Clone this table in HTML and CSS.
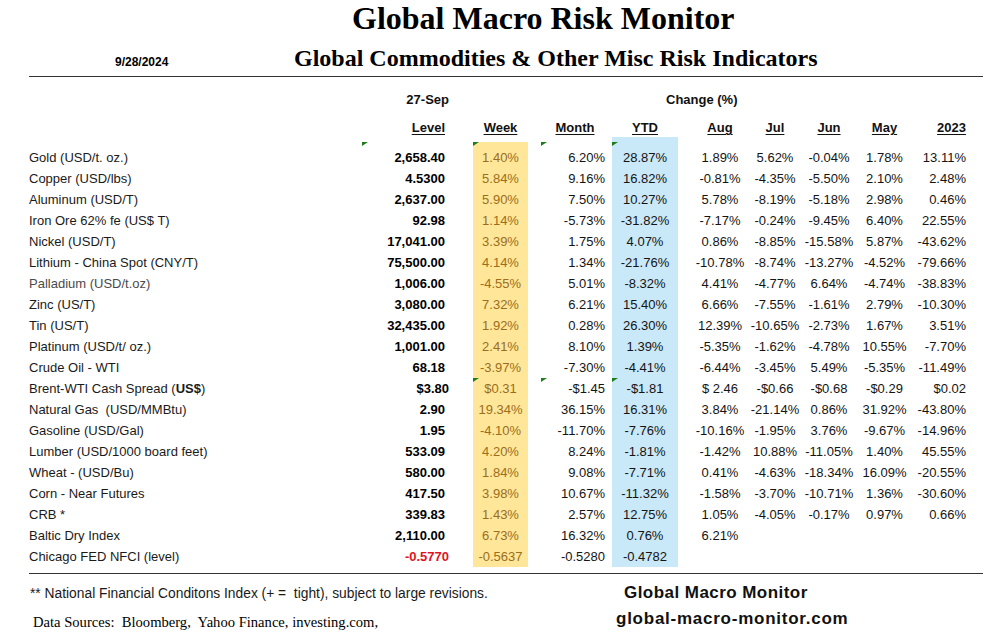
FILE: index.html
```html
<!DOCTYPE html>
<html lang="en">
<head>
<meta charset="utf-8">
<title>Global Macro Risk Monitor</title>
<link rel="stylesheet" href="styles.css">
</head>
<body>
<div class="page">
  <h1 class="title">Global Macro Risk Monitor</h1>
  <div class="subrow">
    <span class="date">9/28/2024</span>
    <h2 class="subtitle">Global Commodities &amp; Other Misc Risk Indicators</h2>
  </div>
  <div class="rule"></div>

  <div class="table">
    <div class="row hrow-a">
      <div></div>
      <div class="lvl-h">27-Sep</div>
      <div class="chg">Change (%)</div>
    </div>
    <div class="row hrow-b">
      <div></div>
      <div class="lvl"><span class="u">Level</span></div>
      <div class="wk-h"><span class="u">Week</span></div>
      <div class="mo-h"><span class="u">Month</span></div>
      <div class="ytd-h"><span class="u">YTD</span></div>
      <div class="aug"><span class="u">Aug</span></div>
      <div class="c"><span class="u">Jul</span></div>
      <div class="c"><span class="u">Jun</span></div>
      <div class="c"><span class="u">May</span></div>
      <div class="r"><span class="u">2023</span></div>
    </div>

    <div class="row first">
      <div class="lab">Gold (USD/t. oz.)</div>
      <div class="lvl flag fl-l">2,658.40</div>
      <div class="wk flag">1.40%</div>
      <div class="mo flag fl-m">6.20%</div>
      <div class="ytd flag">28.87%</div>
      <div class="aug">1.89%</div><div class="c">5.62%</div><div class="c">-0.04%</div><div class="c">1.78%</div><div class="r">13.11%</div>
    </div>
    <div class="row">
      <div class="lab">Copper (USD/lbs)</div>
      <div class="lvl">4.5300</div><div class="wk">5.84%</div><div class="mo">9.16%</div><div class="ytd">16.82%</div>
      <div class="aug">-0.81%</div><div class="c">-4.35%</div><div class="c">-5.50%</div><div class="c">2.10%</div><div class="r">2.48%</div>
    </div>
    <div class="row">
      <div class="lab">Aluminum (USD/T)</div>
      <div class="lvl">2,637.00</div><div class="wk">5.90%</div><div class="mo">7.50%</div><div class="ytd">10.27%</div>
      <div class="aug">5.78%</div><div class="c">-8.19%</div><div class="c">-5.18%</div><div class="c">2.98%</div><div class="r">0.46%</div>
    </div>
    <div class="row">
      <div class="lab">Iron Ore 62% fe (US$ T)</div>
      <div class="lvl">92.98</div><div class="wk">1.14%</div><div class="mo">-5.73%</div><div class="ytd">-31.82%</div>
      <div class="aug">-7.17%</div><div class="c">-0.24%</div><div class="c">-9.45%</div><div class="c">6.40%</div><div class="r">22.55%</div>
    </div>
    <div class="row">
      <div class="lab">Nickel (USD/T)</div>
      <div class="lvl">17,041.00</div><div class="wk">3.39%</div><div class="mo">1.75%</div><div class="ytd">4.07%</div>
      <div class="aug">0.86%</div><div class="c">-8.85%</div><div class="c">-15.58%</div><div class="c">5.87%</div><div class="r">-43.62%</div>
    </div>
    <div class="row">
      <div class="lab">Lithium - China Spot (CNY/T)</div>
      <div class="lvl">75,500.00</div><div class="wk">4.14%</div><div class="mo">1.34%</div><div class="ytd">-21.76%</div>
      <div class="aug">-10.78%</div><div class="c">-8.74%</div><div class="c">-13.27%</div><div class="c">-4.52%</div><div class="r">-79.66%</div>
    </div>
    <div class="row">
      <div class="lab muted">Palladium (USD/t.oz)</div>
      <div class="lvl">1,006.00</div><div class="wk">-4.55%</div><div class="mo">5.01%</div><div class="ytd">-8.32%</div>
      <div class="aug">4.41%</div><div class="c">-4.77%</div><div class="c">6.64%</div><div class="c">-4.74%</div><div class="r">-38.83%</div>
    </div>
    <div class="row">
      <div class="lab">Zinc (US/T)</div>
      <div class="lvl">3,080.00</div><div class="wk">7.32%</div><div class="mo">6.21%</div><div class="ytd">15.40%</div>
      <div class="aug">6.66%</div><div class="c">-7.55%</div><div class="c">-1.61%</div><div class="c">2.79%</div><div class="r">-10.30%</div>
    </div>
    <div class="row">
      <div class="lab">Tin (US/T)</div>
      <div class="lvl">32,435.00</div><div class="wk">1.92%</div><div class="mo">0.28%</div><div class="ytd">26.30%</div>
      <div class="aug">12.39%</div><div class="c">-10.65%</div><div class="c">-2.73%</div><div class="c">1.67%</div><div class="r">3.51%</div>
    </div>
    <div class="row">
      <div class="lab">Platinum (USD/t/ oz.)</div>
      <div class="lvl">1,001.00</div><div class="wk">2.41%</div><div class="mo">8.10%</div><div class="ytd">1.39%</div>
      <div class="aug">-5.35%</div><div class="c">-1.62%</div><div class="c">-4.78%</div><div class="c">10.55%</div><div class="r">-7.70%</div>
    </div>
    <div class="row">
      <div class="lab">Crude Oil - WTI</div>
      <div class="lvl">68.18</div><div class="wk">-3.97%</div><div class="mo">-7.30%</div><div class="ytd">-4.41%</div>
      <div class="aug">-6.44%</div><div class="c">-3.45%</div><div class="c">5.49%</div><div class="c">-5.35%</div><div class="r">-11.49%</div>
    </div>
    <div class="row">
      <div class="lab">Brent-WTI Cash Spread (<b>US$</b>)</div>
      <div class="lvl acc">$3.80</div><div class="wk flag">$0.31</div><div class="mo flag fl-m">-$1.45</div><div class="ytd flag">-$1.81</div>
      <div class="aug">$ 2.46</div><div class="c">-$0.66</div><div class="c">-$0.68</div><div class="c">-$0.29</div><div class="r">$0.02</div>
    </div>
    <div class="row">
      <div class="lab">Natural Gas  (USD/MMBtu)</div>
      <div class="lvl">2.90</div><div class="wk">19.34%</div><div class="mo">36.15%</div><div class="ytd">16.31%</div>
      <div class="aug">3.84%</div><div class="c">-21.14%</div><div class="c">0.86%</div><div class="c">31.92%</div><div class="r">-43.80%</div>
    </div>
    <div class="row">
      <div class="lab">Gasoline (USD/Gal)</div>
      <div class="lvl">1.95</div><div class="wk">-4.10%</div><div class="mo">-11.70%</div><div class="ytd">-7.76%</div>
      <div class="aug">-10.16%</div><div class="c">-1.95%</div><div class="c">3.76%</div><div class="c">-9.67%</div><div class="r">-14.96%</div>
    </div>
    <div class="row">
      <div class="lab">Lumber (USD/1000 board feet)</div>
      <div class="lvl">533.09</div><div class="wk">4.20%</div><div class="mo">8.24%</div><div class="ytd">-1.81%</div>
      <div class="aug">-1.42%</div><div class="c">10.88%</div><div class="c">-11.05%</div><div class="c">1.40%</div><div class="r">45.55%</div>
    </div>
    <div class="row">
      <div class="lab">Wheat - (USD/Bu)</div>
      <div class="lvl">580.00</div><div class="wk">1.84%</div><div class="mo">9.08%</div><div class="ytd">-7.71%</div>
      <div class="aug">0.41%</div><div class="c">-4.63%</div><div class="c">-18.34%</div><div class="c">16.09%</div><div class="r">-20.55%</div>
    </div>
    <div class="row">
      <div class="lab">Corn - Near Futures</div>
      <div class="lvl">417.50</div><div class="wk">3.98%</div><div class="mo">10.67%</div><div class="ytd">-11.32%</div>
      <div class="aug">-1.58%</div><div class="c">-3.70%</div><div class="c">-10.71%</div><div class="c">1.36%</div><div class="r">-30.60%</div>
    </div>
    <div class="row">
      <div class="lab">CRB *</div>
      <div class="lvl">339.83</div><div class="wk">1.43%</div><div class="mo">2.57%</div><div class="ytd">12.75%</div>
      <div class="aug">1.05%</div><div class="c">-4.05%</div><div class="c">-0.17%</div><div class="c">0.97%</div><div class="r">0.66%</div>
    </div>
    <div class="row">
      <div class="lab">Baltic Dry Index</div>
      <div class="lvl">2,110.00</div><div class="wk">6.73%</div><div class="mo">16.32%</div><div class="ytd">0.76%</div>
      <div class="aug">6.21%</div><div class="c"></div><div class="c"></div><div class="c"></div><div class="r"></div>
    </div>
    <div class="row">
      <div class="lab">Chicago FED NFCI (level)</div>
      <div class="lvl acc neg">-0.5770</div><div class="wk">-0.5637</div><div class="mo">-0.5280</div><div class="ytd">-0.4782</div>
      <div class="aug"></div><div class="c"></div><div class="c"></div><div class="c"></div><div class="r"></div>
    </div>
  </div>

  <div class="rule bottom"></div>

  <div class="foot">
    <div class="foot-left">
      <div class="note">** National Financial Conditons Index (+ =  tight), subject to large revisions.</div>
      <div class="src">Data Sources:  Bloomberg,  Yahoo Finance, investing.com,</div>
    </div>
    <div class="foot-right">
      <div class="brand">Global Macro Monitor</div>
      <div class="url">global-macro-monitor.com</div>
    </div>
  </div>
</div>
</body>
</html>
```

FILE: styles.css
```css
html, body {
  margin: 0;
  background: #ffffff;
}

body {
  font-family: "Liberation Sans", Arial, sans-serif;
  color: #141414;
}

.page {
  width: 995px;
}

.title {
  margin: 0;
  padding-left: 352px;
  font: bold 32px/36px "Liberation Serif", "Times New Roman", serif;
  color: #000;
}

.subrow {
  display: flex;
  align-items: baseline;
  margin-top: 8px;
  height: 28px;
}

.date {
  box-sizing: border-box;
  width: 294px;
  padding-left: 115px;
  font: bold 12px "Liberation Sans", Arial, sans-serif;
  color: #000;
}

.subtitle {
  margin: 0;
  font: bold 24px/28px "Liberation Serif", "Times New Roman", serif;
  color: #000;
}

.rule {
  margin: 4px 12px 0 29px;
  border-top: 1px solid #333;
}

.rule.bottom {
  margin-top: 6px;
}

/* ---------- table ---------- */
.table {
  margin-left: 29px;
  padding-top: 13px;
  --cols: 331px 113px 55px 84px 66px 70px 54px 54px 57px 53px;
}

.row {
  display: grid;
  grid-template-columns: var(--cols);
  height: 21px;
  line-height: 21px;
  font-size: 13px;
  white-space: pre;
}

.row > div {
  position: relative;
  box-sizing: border-box;
}

.hrow-a {
  height: 20px;
  line-height: 20px;
  font-weight: bold;
  margin-bottom: 8px;
  color: #111;
}

.hrow-b {
  height: 19px;
  line-height: 19px;
  font-weight: bold;
  color: #111;
}

.lvl-h {
  text-align: right;
  padding-right: 24px;
}

.chg {
  grid-column: 5 / 8;
  padding-left: 54px;
}

.u {
  text-decoration: underline;
  text-underline-offset: 2px;
}

.wk-h {
  text-align: center;
}

.mo-h {
  text-align: center;
  padding-left: 10px;
}

.ytd-h {
  text-align: center;
}

.row.first {
  height: 31px;
}

.row.first > div {
  padding-top: 10px;
}

.lab {
  color: #1a1a1a;
}

.lab.muted {
  color: #4a4a4a;
}

.lvl {
  text-align: right;
  padding-right: 28px;
  font-weight: bold;
  color: #000;
}

.lvl.acc {
  padding-right: 24px;
}

.lvl.neg {
  color: #e0141e;
}

.hrow-b .lvl {
  color: #111;
}

.wk {
  text-align: center;
  background: #ffe699;
  color: #9a6e1c;
}

.row.first .wk {
  background: linear-gradient(to bottom, transparent 5px, #ffe699 5px);
}

.mo {
  text-align: right;
  padding-right: 7px;
}

.ytd {
  text-align: center;
  background: #c9e8f8;
}

.aug {
  text-align: center;
  padding-left: 14px;
}

.c {
  text-align: center;
}

.r {
  text-align: right;
}

/* green error-indicator corners */
.flag::before {
  content: "";
  position: absolute;
  top: 0;
  left: 0;
  width: 0;
  height: 0;
  border-top: 4px solid #1b7d1b;
  border-right: 6px solid transparent;
}

.row.first .flag::before {
  top: 5px;
}

.fl-l::before {
  left: 2px;
}

.fl-m::before {
  left: 13px;
}

/* ---------- footer ---------- */
.foot {
  display: flex;
  margin-left: 29px;
}

.foot-left {
  width: 587px;
  padding-top: 10px;
}

.note {
  padding-left: 1px;
  font: 13.8px/20px "Liberation Sans", Arial, sans-serif;
  color: #1a1a1a;
  white-space: pre;
}

.src {
  margin-top: 8px;
  padding-left: 4px;
  font: 14.6px/20px "Liberation Serif", "Times New Roman", serif;
  color: #000;
  white-space: pre;
}

.foot-right {
  padding-top: 9px;
}

.brand {
  padding-left: 8px;
  font: bold 17px/20px "Liberation Sans", Arial, sans-serif;
  letter-spacing: 0.45px;
  color: #111;
}

.url {
  margin-top: 6px;
  font: bold 17px/20px "Liberation Sans", Arial, sans-serif;
  letter-spacing: 0.75px;
  color: #111;
}
```
